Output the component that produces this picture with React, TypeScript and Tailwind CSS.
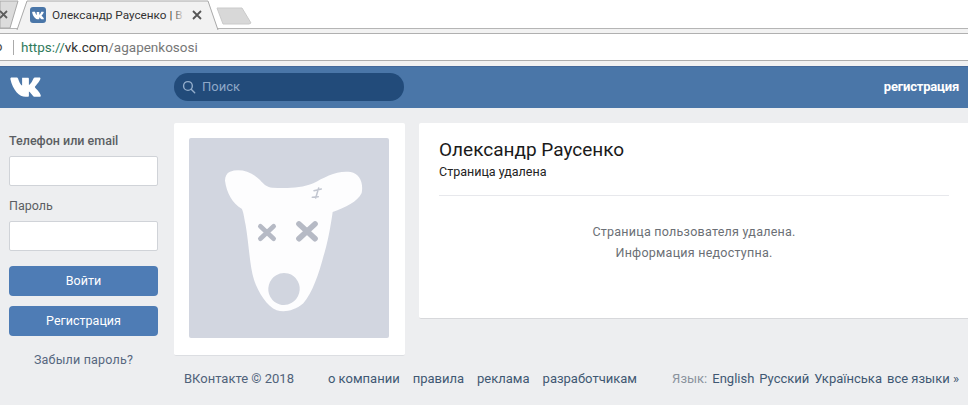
import React from "react";

function VkLogo({ className, color = "#fff" }: { className?: string; color?: string }) {
  return (
    <svg viewBox="0 0 34 24" className={className} fill={color}>
      <path d="M0.5 3.2 C0.3 2.2 0.9 1.5 2 1.5 H7.2 C8.1 1.5 8.6 1.9 8.9 2.8 C10.3 7 12.2 10.4 13.3 10.4 V1.9 H19.6 C20.4 1.9 20.7 2.4 20.7 3.1 V9.6 C21.8 9.6 24 6.6 25.7 2.6 C26 1.9 26.5 1.5 27.3 1.5 H32 C33.2 1.5 33.5 2.2 33.2 3.2 C32.4 5.9 28.3 10.4 27.6 11.2 C27.1 11.8 27.1 12.3 27.6 12.9 C28.4 13.8 33 18.2 33.6 21 C33.9 22.1 33.3 22.7 32.2 22.7 H27 C26 22.7 25.5 22.2 24.8 21.3 C23.8 20 22.3 17.8 20.7 16.9 V21.6 C20.7 22.3 20.3 22.7 19.3 22.7 H17 C10.5 22.7 3 15.5 0.5 3.2 Z" />
    </svg>
  );
}

function Dog() {
  return (
    <svg viewBox="0 0 600 600" className="w-full h-full">
      <path
        fill="#fdfdfe"
        d="M123 101 C150 92 185 98 213 126 C225 140 235 148 250 149 C285 151 335 152 373 136 C405 118 445 96 485 102 C512 107 524 135 518 165 C505 192 470 208 431 222 C425 265 415 320 403 356 C390 405 370 465 343 496 C315 520 285 523 263 517 C235 505 208 465 195 425 C182 385 180 320 170 262 C165 235 163 220 158 212 C130 195 113 165 108 128 C108 115 113 105 123 101 Z"
      />
      <ellipse cx="285" cy="453" rx="47" ry="48" fill="#d1d5df" transform="rotate(15 285 453)" />
      <g stroke="#b6bac5" strokeLinecap="round" strokeWidth="14" fill="none">
        <path d="M214 265 L254 302 M254 265 L214 302" />
      </g>
      <g stroke="#b6bac5" strokeLinecap="round" strokeWidth="17" fill="none">
        <path d="M330 258 L378 302 M378 258 L330 302" />
      </g>
      <path d="M397 153 L375 158 M389 150 L380 180 M370 178 L388 176" stroke="#c2c6d0" strokeWidth="4.5" strokeLinecap="round" fill="none" />
    </svg>
  );
}

function TabStrip() {
  return (
    <div className="h-[34px] bg-[#f2f2f2] relative overflow-hidden border-b border-[#b0b0b0]">
      <div className="h-[29px] border-b border-[#b5b5b5] bg-white" />
      <div className="absolute left-0 top-0 h-[29px] w-[23px]">
        <svg viewBox="0 0 23 29" className="w-full h-full">
          <path d="M0 1 H18 L10 28 H0 Z" fill="#dcdcdc" stroke="#a8a8a8" />
          <path d="M0 11 L7 18 M7 11 L0 18" stroke="#5c5c5c" strokeWidth="1.8" />
        </svg>
      </div>
      <div className="absolute left-[16px] top-0 w-[205px] h-[30px]">
        <svg viewBox="0 0 205 30" className="w-full h-full">
          <path d="M1 30 L11 1 H192 L202 30" fill="#f2f2f2" stroke="#a8a8a8" />
        </svg>
      </div>
      <div className="absolute left-[30px] top-[7px] w-[16px] h-[16px] rounded-[3px] bg-[#4a76a8] flex items-center justify-center">
        <VkLogo className="w-[12px] h-[9px]" />
      </div>
      <div className="absolute left-[52px] top-[6px] whitespace-nowrap text-[11.75px] leading-[18px] text-[#333]">
        Олександр Раусенко | В
      </div>
      <div className="absolute left-[172px] top-[4px] w-[12px] h-[22px] bg-gradient-to-r from-transparent to-[#f2f2f2]" />
      <svg viewBox="0 0 10 10" className="absolute left-[192px] top-[10px] w-[10px] h-[10px]">
        <path d="M1 1 L9 9 M9 1 L1 9" stroke="#555" strokeWidth="1.8" />
      </svg>
      <svg viewBox="0 0 36 18" className="absolute left-[216px] top-[7px] w-[36px] h-[18px]">
        <path d="M1 1 H26 L35 16 L33 17 H7 Z" fill="#d8d8d8" stroke="#cacaca" />
      </svg>
    </div>
  );
}

function AddressBar() {
  return (
    <div className="h-[27px] bg-white border-b border-[#adadad] flex items-center text-[13.5px]">
      <span className="text-[#444] text-[13px] w-[13px] overflow-hidden">
        <span className="block -ml-[5px]">o</span>
      </span>
      <span className="w-px h-[15px] bg-[#aaa]" />
      <span className="ml-[7px] text-[#2f7a5c]">https://</span>
      <span className="text-[#333]">vk.com</span>
      <span className="text-[#777]">/agapenkososi</span>
    </div>
  );
}

function Input() {
  return <div className="h-[30px] bg-white border border-[#d0d3d8] rounded-[2px]" />;
}

function Sidebar() {
  return (
    <aside className="w-[149px] ml-[9px] shrink-0 pt-[25px]">
      <div className="text-[12.5px] font-medium leading-[16px] text-[#5b5e63]">Телефон или email</div>
      <div className="mt-[7px]"><Input /></div>
      <div className="mt-[12px] text-[12.5px] leading-[16px] text-[#5b5e63]">Пароль</div>
      <div className="mt-[7px]"><Input /></div>
      <div className="mt-[15px] h-[30px] rounded-[4px] bg-[#4e7cb5] text-white text-[12.5px] flex items-center justify-center">Войти</div>
      <div className="mt-[10px] h-[30px] rounded-[4px] bg-[#4e7cb5] text-white text-[12.5px] flex items-center justify-center">Регистрация</div>
      <div className="mt-[16px] text-center text-[12.5px] leading-[16px] text-[#56677f] tracking-[0.2px]">Забыли пароль?</div>
    </aside>
  );
}

export default function App() {
  return (
    <div className="w-[968px] h-[405px] overflow-hidden bg-[#edeef0] font-['Roboto',sans-serif]">
      <TabStrip />
      <AddressBar />
      <div className="h-[5px] bg-[#f1f1f1]" />
      <header className="h-[42px] bg-[#4a76a8] flex items-center pb-[1px] shadow-[inset_0_1px_0_#44699a]">
        <VkLogo className="ml-[9px] w-[33px] h-[22px]" />
        <div className="ml-[132px] w-[230px] h-[28px] rounded-[14px] bg-[#224b7a] flex items-center pl-[8px] text-[#8fa8c8] text-[13px]">
          <svg viewBox="0 0 16 16" className="w-[14px] h-[14px] mr-[6px]" fill="none" stroke="#93adcb" strokeWidth="1.6">
            <circle cx="6.8" cy="6.8" r="5" />
            <path d="M10.5 10.5 L14.5 14.5" strokeLinecap="round" />
          </svg>
          Поиск
        </div>
        <div className="ml-auto mr-[9px] text-white text-[13px] font-bold tracking-[-0.2px]">регистрация</div>
      </header>
      <div className="flex">
        <Sidebar />
        <main className="ml-[16px] flex-1 min-w-0 pt-[15px]">
          <div className="flex items-start">
            <div className="w-[231px] h-[233px] shrink-0 bg-white rounded-[2px] border-b border-[#dcdee2] p-[15px]">
              <div className="w-[200px] h-[200px] bg-[#d2d6e0] rounded-[2px]">
                <Dog />
              </div>
            </div>
            <div className="ml-[14px] flex-1 h-[196px] bg-white rounded-l-[2px] border-b border-[#d7d8db] pl-[20px] pr-[19px] pt-[15px]">
              <div className="text-[19px] leading-[24px] text-[#1a1a1a]">Олександр Раусенко</div>
              <div className="mt-[1px] text-[12.5px] leading-[18px] text-[#222]">Страница удалена</div>
              <div className="mt-[14px] h-px bg-[#e7e8ec]" />
              <div className="mt-[25px] text-center text-[12.5px] leading-[21px] text-[#6b6f75] tracking-[0.25px]">
                <div>Страница пользователя удалена.</div>
                <div>Информация недоступна.</div>
              </div>
            </div>
          </div>
          <footer className="mt-[15px] ml-[10px] flex items-center text-[13px] leading-[16px] whitespace-nowrap">
            <span className="text-[#50627a]">ВКонтакте © 2018</span>
            <div className="ml-[34px] flex gap-[13px] text-[#3f5873]">
              <span>о компании</span>
              <span>правила</span>
              <span>реклама</span>
              <span>разработчикам</span>
            </div>
            <div className="ml-auto mr-[9px] flex gap-[5px] text-[#3f5873]">
              <span className="text-[#8b939d]">Язык:</span>
              <span>English</span>
              <span>Русский</span>
              <span>Українська</span>
              <span>все языки »</span>
            </div>
          </footer>
        </main>
      </div>
    </div>
  );
}
